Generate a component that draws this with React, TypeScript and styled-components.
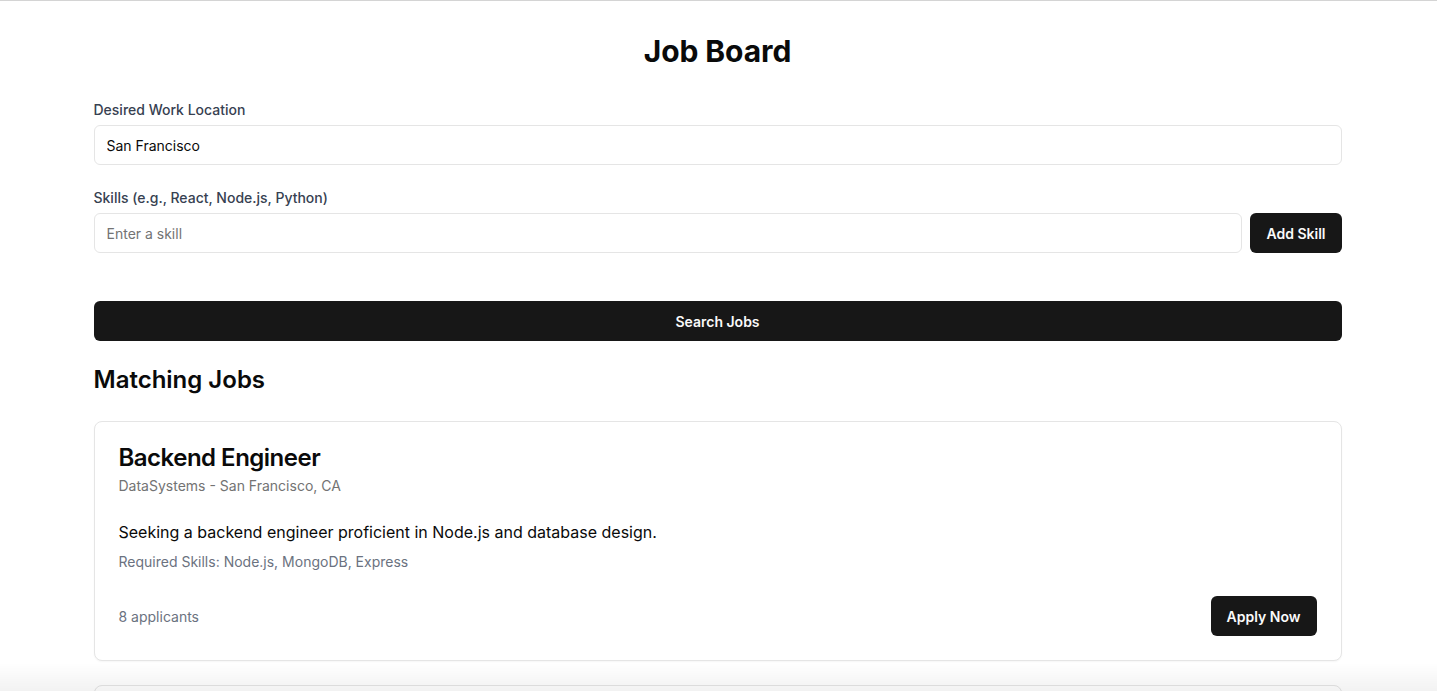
import styled, { createGlobalStyle } from "styled-components";

const GlobalStyle = createGlobalStyle`
	* {
		box-sizing: border-box;
	}

	body {
		margin: 0;
		background: #ffffff;
		font-family: Inter, "Noto Sans", "Liberation Sans", sans-serif;
		color: #0a0a0a;
		border-top: 1px solid #d4d4d4;
	}
`;

const JOBS = [
	{
		title: "Backend Engineer",
		company: "DataSystems",
		location: "San Francisco, CA",
		description:
			"Seeking a backend engineer proficient in Node.js and database design.",
		skills: ["Node.js", "MongoDB", "Express"],
		applicants: 8
	},
	{
		title: "Frontend Developer",
		company: "WebWorks",
		location: "San Francisco, CA",
		description: "Build modern user interfaces with React and TypeScript.",
		skills: ["React", "TypeScript", "CSS"],
		applicants: 12
	}
];

export default function App() {
	return (
		<>
			<GlobalStyle />
			<Page>
				<Title>Job Board</Title>

				<Field>
					<Label>Desired Work Location</Label>
					<Input defaultValue="San Francisco" />
				</Field>

				<Field>
					<Label>Skills (e.g., React, Node.js, Python)</Label>
					<SkillRow>
						<SkillInput placeholder="Enter a skill" />
						<Button>Add Skill</Button>
					</SkillRow>
				</Field>

				<SearchButton>Search Jobs</SearchButton>

				<SectionTitle>Matching Jobs</SectionTitle>

				<JobList>
					{JOBS.map((job) => (
						<Card key={job.title}>
							<CardHeader>
								<JobTitle>{job.title}</JobTitle>
								<Company>
									{job.company} - {job.location}
								</Company>
							</CardHeader>
							<CardContent>
								<Description>{job.description}</Description>
								<Skills>Required Skills: {job.skills.join(", ")}</Skills>
							</CardContent>
							<CardFooter>
								<Applicants>{job.applicants} applicants</Applicants>
								<Button>Apply Now</Button>
							</CardFooter>
						</Card>
					))}
				</JobList>
			</Page>
			<BottomShade />
		</>
	);
}

const Page = styled.main`
	max-width: 1280px;
	margin: 0 auto;
	padding: 32px 17px 32px 15px;
	display: flex;
	flex-direction: column;
`;

const Title = styled.h1`
	margin: 0 0 31px;
	font-size: 30px;
	line-height: 36px;
	font-weight: 700;
	text-align: center;
	letter-spacing: -0.1px;
`;

const Field = styled.div`
	display: flex;
	flex-direction: column;
	gap: 5px;
	margin-bottom: 23px;
`;

const Label = styled.label`
	font-size: 14px;
	line-height: 20px;
	font-weight: 500;
	color: #374151;
`;

const Input = styled.input`
	width: 100%;
	height: 40px;
	padding: 0 12px;
	border: 1px solid #e5e5e5;
	border-radius: 6px;
	font-family: inherit;
	font-size: 14px;
	color: #0a0a0a;
	background: #ffffff;
	outline: none;

	&::placeholder {
		color: #737373;
	}
`;

const SkillInput = styled(Input)`
	flex: 1;
`;

const SkillRow = styled.div`
	display: flex;
	gap: 8px;
`;

const Button = styled.button`
	height: 40px;
	padding: 0 16px;
	border: none;
	border-radius: 6px;
	background: #171717;
	color: #fafafa;
	font-family: inherit;
	font-size: 14px;
	font-weight: 600;
	cursor: pointer;
`;

const SearchButton = styled(Button)`
	width: 100%;
	margin-top: 25px;
`;

const SectionTitle = styled.h2`
	margin: 23px 0 25px;
	font-size: 24px;
	line-height: 32px;
	font-weight: 600;
`;

const JobList = styled.div`
	display: flex;
	flex-direction: column;
	gap: 24px;
`;

const Card = styled.article`
	border: 1px solid #e5e5e5;
	border-radius: 8px;
	background: #ffffff;
	box-shadow: 0 1px 2px rgba(0, 0, 0, 0.04);
`;

const CardHeader = styled.div`
	display: flex;
	flex-direction: column;
	gap: 6px;
	padding: 24px;
`;

const JobTitle = styled.h3`
	margin: 0;
	font-size: 24px;
	line-height: 24px;
	font-weight: 600;
	letter-spacing: -0.5px;
`;

const Company = styled.p`
	margin: 0;
	font-size: 14px;
	line-height: 20px;
	color: #737373;
`;

const CardContent = styled.div`
	padding: 0 24px 24px;
`;

const Description = styled.p`
	margin: 0;
	font-size: 16px;
	line-height: 24px;
`;

const Skills = styled.p`
	margin: 8px 0 0;
	font-size: 14px;
	line-height: 20px;
	color: #6b7280;
`;

const CardFooter = styled.div`
	display: flex;
	align-items: center;
	justify-content: space-between;
	padding: 0 24px 24px;
`;

const Applicants = styled.span`
	font-size: 14px;
	color: #6b7280;
`;

const BottomShade = styled.div`
	position: fixed;
	left: 0;
	right: 0;
	bottom: 0;
	height: 28px;
	pointer-events: none;
	background: linear-gradient(to bottom, rgba(0, 0, 0, 0), rgba(0, 0, 0, 0.05));
`;
